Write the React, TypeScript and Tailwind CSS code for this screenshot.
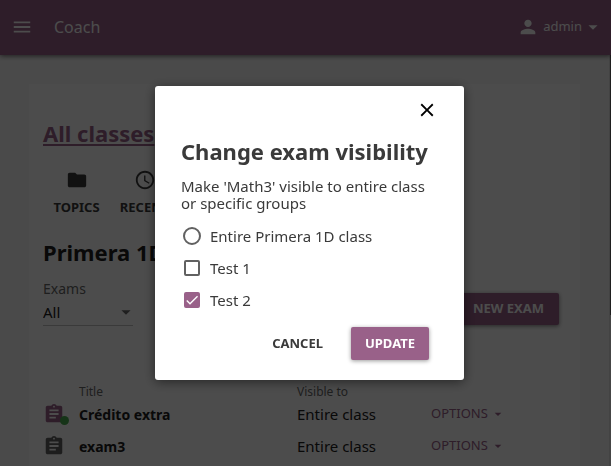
import { useState } from 'react';
import {
  MdAccessTime,
  MdArrowDropDown,
  MdAssignment,
  MdCheck,
  MdClose,
  MdFolder,
  MdMenu,
  MdPerson,
} from 'react-icons/md';

const exams = [
  { title: 'Crédito extra', visibleTo: 'Entire class', active: true },
  { title: 'exam3', visibleTo: 'Entire class', active: false },
];

function AppBar() {
  return (
    <header className="relative flex h-[55px] items-center bg-[#996189] pr-[7px] pb-px pl-[11px] text-white shadow-[0_1px_5px_rgba(0,0,0,0.6)]">
      <button type="button" aria-label="Menu">
        <MdMenu size={22} />
      </button>
      <span className="ml-[21px] text-[16px]">Coach</span>
      <button type="button" className="ml-auto flex items-center text-[13px]">
        <MdPerson size={22} />
        <span className="ml-1">admin</span>
        <MdArrowDropDown size={22} />
      </button>
    </header>
  );
}

function Tabs() {
  return (
    <nav className="flex text-[13px] leading-4 font-bold text-[#3a3a3a]">
      <a href="#topics" className="flex w-[67px] flex-col items-center gap-2">
        <MdFolder size={22} />
        TOPICS
      </a>
      <a href="#recent" className="flex w-[69px] flex-col items-center gap-2">
        <MdAccessTime size={22} />
        RECENT
      </a>
    </nav>
  );
}

function ClassPage() {
  return (
    <main className="flex-1 px-[29px] pt-[29px] text-[#212121]">
      <div className="bg-white px-[14px] pt-[35px] pb-2">
        <h1 className="text-[22px] leading-7 font-bold text-[#996189]">
          <a href="#classes" className="underline underline-offset-2">
            All classes
          </a>
        </h1>
        <div className="mt-[22px]">
          <Tabs />
        </div>
        <h2 className="mt-[23px] text-[22px] leading-7 font-bold">Primera 1D</h2>
        <div className="mt-[13px] flex items-end justify-between pr-[7px]">
          <div className="flex w-[90px] flex-col">
            <label htmlFor="exam-filter" className="text-[14px] leading-5 text-[#686868]">
              Exams
            </label>
            <div className="relative flex border-b border-[#c4c4c4]">
              <select id="exam-filter" className="h-[26px] w-full appearance-none text-[15px]">
                <option>All</option>
              </select>
              <MdArrowDropDown size={22} className="pointer-events-none absolute top-0.5 -right-1 text-[#686868]" />
            </div>
          </div>
          <button
            type="button"
            className="mb-px h-8 rounded-xs bg-[#996189] px-[15px] text-[13px] font-bold text-white shadow-[0_1px_4px_rgba(0,0,0,0.5)]"
          >
            NEW EXAM
          </button>
        </div>
        <table className="mt-[60px] w-full table-fixed text-left">
          <colgroup>
            <col className="w-9" />
            <col className="w-[218px]" />
            <col className="w-[134px]" />
            <col />
          </colgroup>
          <thead>
            <tr className="h-3 text-[12px] leading-3 text-[#686868]">
              <th aria-label="Type" />
              <th className="font-normal">Title</th>
              <th className="font-normal">Visible to</th>
              <th aria-label="Options" />
            </tr>
          </thead>
          <tbody>
            {exams.map((exam) => (
              <tr key={exam.title} className="h-8 text-[15px]">
                <td>
                  <span
                    className={
                      exam.active
                        ? 'relative block w-[22px] text-[#996189]'
                        : 'relative block w-[22px] text-[#616161]'
                    }
                  >
                    <MdAssignment size={22} />
                    {exam.active && (
                      <span className="absolute -right-1 bottom-0 h-[9px] w-[9px] rounded-full bg-[#4caf50]" />
                    )}
                  </span>
                </td>
                <td className="text-[14px] font-bold">{exam.title}</td>
                <td>{exam.visibleTo}</td>
                <td>
                  <button type="button" className="flex items-center gap-0.5 text-[13px] text-[#996189]">
                    OPTIONS
                    <MdArrowDropDown size={16} />
                  </button>
                </td>
              </tr>
            ))}
          </tbody>
        </table>
      </div>
    </main>
  );
}

function VisibilityDialog() {
  const [entire, setEntire] = useState(false);
  const [groups, setGroups] = useState<Record<string, boolean>>({ 'Test 1': false, 'Test 2': true });

  return (
    <div
      role="dialog"
      aria-labelledby="dialog-title"
      className="flex w-[309px] flex-col rounded-[3px] bg-white px-[26px] pt-[13px] pb-5 shadow-[0_2px_12px_rgba(0,0,0,0.5)]"
    >
      <button type="button" aria-label="Close" className="self-end text-black">
        <MdClose size={22} />
      </button>
      <h2 id="dialog-title" className="mt-4 text-[22px] leading-7 font-bold whitespace-nowrap">
        Change exam visibility
      </h2>
      <p className="mt-[13px] text-[15px] leading-[17px]">Make 'Math3' visible to entire class or specific groups</p>
      <div className="mt-2 flex flex-col text-[15px]">
        <label className="flex h-8 items-center gap-[7px]">
          <span className="flex w-[22px] justify-center">
            <input
              type="radio"
              checked={entire}
              onChange={() => {
                setEntire(true);
                setGroups({ 'Test 1': false, 'Test 2': false });
              }}
              className="h-[18px] w-[18px] appearance-none rounded-full border-2 border-[#616161] checked:border-[#996189] checked:bg-[#996189]"
            />
          </span>
          Entire Primera 1D class
        </label>
        {Object.keys(groups).map((name) => (
          <label key={name} className="flex h-8 items-center gap-[7px]">
            <span className="relative flex w-[22px] justify-center">
              <input
                type="checkbox"
                checked={groups[name]}
                onChange={() => {
                  setEntire(false);
                  setGroups({ ...groups, [name]: !groups[name] });
                }}
                className="h-4 w-4 appearance-none rounded-[2px] border-2 border-[#616161] checked:border-[#996189] checked:bg-[#996189]"
              />
              {groups[name] && <MdCheck size={16} className="pointer-events-none absolute top-0 text-white" />}
            </span>
            {name}
          </label>
        ))}
      </div>
      <div className="mt-[11px] flex justify-end gap-[14px] pr-[9px] text-[13px] font-bold">
        <button type="button" className="h-[33px] px-[14px]">
          CANCEL
        </button>
        <button type="button" className="h-[33px] rounded-xs bg-[#996189] px-[14px] text-white shadow-[0_1px_4px_rgba(0,0,0,0.4)]">
          UPDATE
        </button>
      </div>
    </div>
  );
}

export default function App() {
  return (
    <div className="h-screen overflow-hidden bg-[#f9f9f9] font-['Noto_Sans',sans-serif] text-[#3a3a3a]">
      <AppBar />
      <div className="flex">
        <ClassPage />
        <div className="w-0.5 border-l border-[#e0e0e0] bg-[#e8e8e8]">
          <div className="h-[260px] bg-[#686868]" />
        </div>
      </div>
      <div className="fixed inset-0 flex items-center justify-center bg-black/70 pl-2">
        <VisibilityDialog />
      </div>
    </div>
  );
}
